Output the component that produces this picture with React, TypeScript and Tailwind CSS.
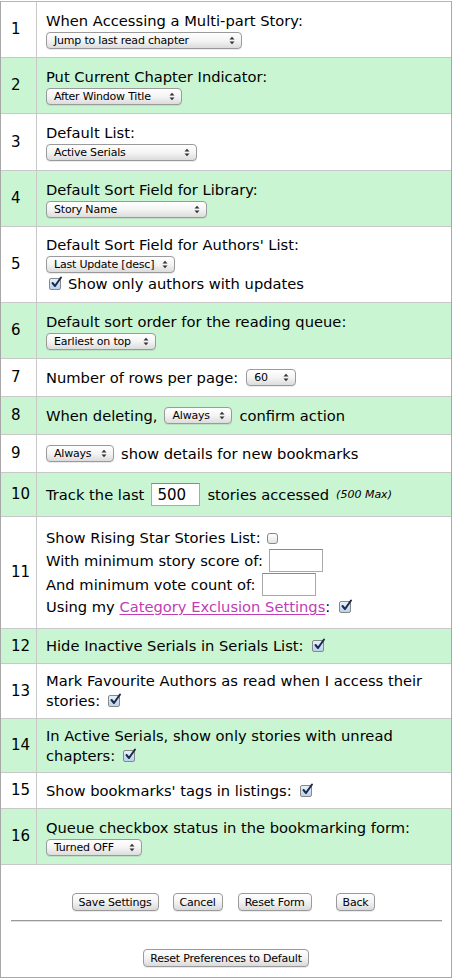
import React from "react";

const font = { fontFamily: '"DejaVu Sans", "Lucida Grande", sans-serif' };

function Sel({ label, w }: { label: string; w: string }) {
  return (
    <span
      className={`inline-flex items-center justify-between whitespace-nowrap h-[17px] rounded-[4px] border border-[#9a9a9a] bg-gradient-to-b from-white via-[#f4f4f4] to-[#dcdcdc] pl-[7px] pr-[6px] text-[11px] leading-none tracking-[-0.2px] text-black align-middle shadow-[0_1px_0_rgba(0,0,0,0.08)] ${w}`}
    >
      <span>{label}</span>
      <svg width="6" height="9" viewBox="0 0 6 9" className="ml-2 shrink-0">
        <path d="M0.5 3.5 L3 0.8 L5.5 3.5 Z" fill="#333" />
        <path d="M0.5 5.5 L3 8.2 L5.5 5.5 Z" fill="#333" />
      </svg>
    </span>
  );
}

function Check({ on }: { on: boolean }) {
  return (
    <span className="inline-flex items-center justify-center w-[12px] h-[12px] rounded-[2px] border border-[#888] bg-gradient-to-b from-[#e8f1fb] to-[#b9d2ee] align-middle relative shrink-0">
      {on && (
        <svg width="13" height="13" viewBox="0 0 13 13" className="absolute left-[0px] top-[-3px]">
          <path d="M2.5 7 L5 10 L11 1.5" stroke="#1a2a4a" strokeWidth="2" fill="none" strokeLinecap="round" strokeLinejoin="round" />
        </svg>
      )}
    </span>
  );
}

function Box({ w, value }: { w: string; value?: string }) {
  return (
    <span className={`inline-flex items-center h-[23px] border border-[#a9a9a9] border-t-[#8a8a8a] bg-white px-[5px] text-[15px] align-middle ${w}`}>
      {value}
    </span>
  );
}

function Btn({ children, className = "" }: { children: React.ReactNode; className?: string }) {
  return (
    <span className={`flex items-center whitespace-nowrap h-[18px] rounded-[4px] border border-[#9a9a9a] bg-gradient-to-b from-white via-[#f3f3f3] to-[#dadada] px-[6px] text-[11px] leading-none tracking-[-0.2px] text-black shadow-[0_1px_0_rgba(0,0,0,0.08)] ${className}`}>
      {children}
    </span>
  );
}

function Row({
  n,
  green,
  children,
  h,
}: {
  n: number;
  green?: boolean;
  children: React.ReactNode;
  h: string;
}) {
  return (
    <div className={`flex border-b border-[#c8c8c8] ${green ? "bg-[#c9f5d3]" : "bg-white"} ${h}`}>
      <div className="w-[36px] shrink-0 border-r border-[#c8c8c8] flex items-center pl-[10px] text-[15px]">
        {n}
      </div>
      <div className="flex-1 flex flex-col justify-center pl-[9px] pr-2 text-[14.7px] leading-[20px]">{children}</div>
    </div>
  );
}

export default function App() {
  return (
    <div className="w-[453px] h-[980px] bg-white text-black" style={font}>
      <div className="ml-0 mt-[1px] w-[452px] h-[977px] border border-[#a8a8a8] border-t-[#b5b5b5] flex flex-col">
        <Row n={1} h="h-[56px]">
          <div>When Accessing a Multi-part Story:</div>
          <div className="mt-[1px] flex"><Sel label="Jump to last read chapter" w="w-[196px]" /></div>
        </Row>
        <Row n={2} green h="h-[56px]">
          <div>Put Current Chapter Indicator:</div>
          <div className="mt-[1px] flex"><Sel label="After Window Title" w="w-[136px]" /></div>
        </Row>
        <Row n={3} h="h-[57px]">
          <div>Default List:</div>
          <div className="mt-[1px] flex"><Sel label="Active Serials" w="w-[151px]" /></div>
        </Row>
        <Row n={4} green h="h-[56px]">
          <div>Default Sort Field for Library:</div>
          <div className="mt-[1px] flex"><Sel label="Story Name" w="w-[161px]" /></div>
        </Row>
        <Row n={5} h="h-[76px]">
          <div>Default Sort Field for Authors' List:</div>
          <div className="mt-[1px] flex"><Sel label="Last Update [desc]" w="w-[129px]" /></div>
          <div className="flex items-center gap-[7px] mt-[1px]">
            <span className="ml-[3px] flex"><Check on /></span>
            <span>Show only authors with updates</span>
          </div>
        </Row>
        <Row n={6} green h="h-[56px]">
          <div>Default sort order for the reading queue:</div>
          <div className="mt-[1px] flex"><Sel label="Earliest on top" w="w-[110px]" /></div>
        </Row>
        <Row n={7} h="h-[38px]">
          <div className="flex items-center gap-[8px]">
            <span>Number of rows per page:</span>
            <Sel label="60" w="w-[50px]" />
          </div>
        </Row>
        <Row n={8} green h="h-[38px]">
          <div className="flex items-center gap-[7px]">
            <span>When deleting,</span>
            <Sel label="Always" w="w-[68px]" />
            <span>confirm action</span>
          </div>
        </Row>
        <Row n={9} h="h-[38px]">
          <div className="flex items-center gap-[7px]">
            <Sel label="Always" w="w-[68px]" />
            <span>show details for new bookmarks</span>
          </div>
        </Row>
        <Row n={10} green h="h-[44px]">
          <div className="flex items-center gap-[7px]">
            <span>Track the last</span>
            <Box w="w-[49px]" value="500" />
            <span>stories accessed</span>
            <span className="italic text-[11px]">(500 Max)</span>
          </div>
        </Row>
        <Row n={11} h="h-[112px]">
          <div className="flex items-center gap-[6px]">
            <span>Show Rising Star Stories List:</span>
            <span className="inline-block w-[11px] h-[11px] rounded-[3px] border border-[#888] bg-gradient-to-b from-white to-[#e4e4e4]" />
          </div>
          <div className="flex items-center gap-[6px] mt-[1px]">
            <span>With minimum story score of:</span>
            <Box w="w-[54px]" />
          </div>
          <div className="flex items-center gap-[6px] mt-[1px]">
            <span>And minimum vote count of:</span>
            <Box w="w-[54px]" />
          </div>
          <div className="flex items-center mt-[1px]">
            <span>Using my&nbsp;</span>
            <span className="text-[#c13cb6] underline underline-offset-2">Category Exclusion Settings</span>
            <span>:&nbsp;</span>
            <span className="ml-[4px] flex"><Check on /></span>
          </div>
        </Row>
        <Row n={12} green h="h-[35px]">
          <div className="flex items-center gap-[8px]">
            <span>Hide Inactive Serials in Serials List:</span>
            <Check on />
          </div>
        </Row>
        <Row n={13} h="h-[55px]">
          <div>Mark Favourite Authors as read when I access their</div>
          <div className="flex items-center gap-[8px]">
            <span>stories:</span>
            <Check on />
          </div>
        </Row>
        <Row n={14} green h="h-[54px]">
          <div>In Active Serials, show only stories with unread</div>
          <div className="flex items-center gap-[8px]">
            <span>chapters:</span>
            <Check on />
          </div>
        </Row>
        <Row n={15} h="h-[36px]">
          <div className="flex items-center gap-[8px]">
            <span>Show bookmarks' tags in listings:</span>
            <Check on />
          </div>
        </Row>
        <Row n={16} green h="h-[56px]">
          <div>Queue checkbox status in the bookmarking form:</div>
          <div className="mt-[1px] flex"><Sel label="Turned OFF" w="w-[96px]" /></div>
        </Row>
        <div className="flex-1 flex flex-col items-center">
          <div className="mt-[28px] flex items-center pr-[5px]">
            <Btn>Save Settings</Btn>
            <Btn className="ml-[14px]">Cancel</Btn>
            <Btn className="ml-[15px]">Reset Form</Btn>
            <Btn className="ml-[24px]">Back</Btn>
          </div>
          <div className="mt-[9px] w-[431px] h-[2px] border-t border-[#9a9a9a] border-b border-b-[#e0e0e0]" />
          <div className="mt-[27px] flex">
            <Btn>Reset Preferences to Default</Btn>
          </div>
        </div>
      </div>
    </div>
  );
}
